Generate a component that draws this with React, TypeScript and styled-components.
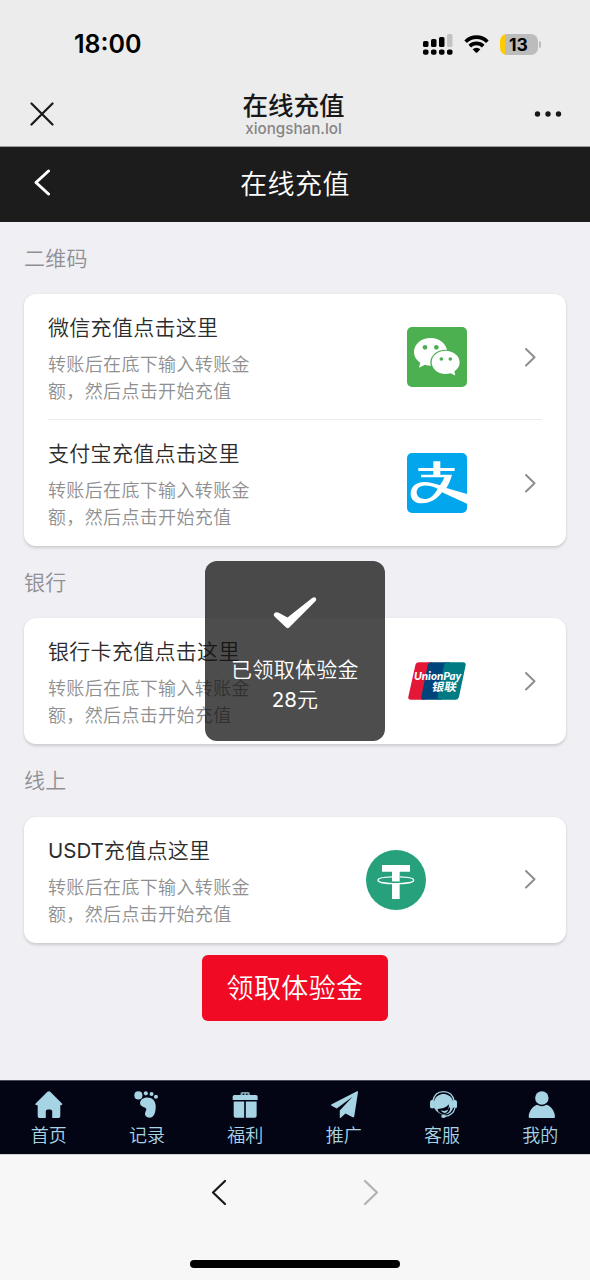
import React from 'react';
import styled, { createGlobalStyle } from 'styled-components';

const GlobalStyle = createGlobalStyle`
  * { box-sizing: border-box; }
  body {
    margin: 0;
    background: #efeff4;
    font-family: Inter, "Noto Sans CJK SC", sans-serif;
    font-weight: 400;
  }
`;

const Screen = styled.div`
  position: relative;
  display: flex;
  flex-direction: column;
  width: 590px;
  height: 1280px;
  overflow: hidden;
  background: #efeff4;
`;

const BrowserTop = styled.header`
  display: flex;
  flex-direction: column;
  height: 147px;
  background: #ececec;
  border-bottom: 1px solid #9c9c9c;
`;

const StatusBar = styled.div`
  display: flex;
  align-items: center;
  justify-content: space-between;
  height: 81px;
  padding: 7px 49px 0 74px;
`;

const Clock = styled.span`
  font-size: 25px;
  font-weight: 600;
  line-height: 30px;
  color: #000;
`;

const StatusIcons = styled.div`
  display: flex;
  align-items: center;
  gap: 11px;
`;

const Battery = styled.div`
  display: flex;
  align-items: center;
  gap: 1px;
`;

const BatteryBody = styled.div`
  width: 38px;
  height: 21px;
  border-radius: 7px;
  background: linear-gradient(90deg, #fdcb00 5px, #bcbcbc 5px);
  font-size: 17.5px;
  font-weight: 700;
  line-height: 21px;
  text-align: center;
  padding-right: 1px;
  color: #000;
`;

const BatteryTip = styled.div`
  width: 2px;
  height: 7px;
  border-radius: 0 2px 2px 0;
  background: #bcbcbc;
`;

const BrowserNav = styled.div`
  display: grid;
  grid-template-columns: 60px 1fr 60px;
  align-items: center;
  height: 65px;
  padding: 0 12px;
`;

const NavIcon = styled.svg`
  display: block;
  justify-self: center;
`;

const PageInfo = styled.div`
  display: flex;
  flex-direction: column;
  align-items: center;
  padding: 0 3px 0 0;
`;

const PageTitle = styled.div`
  font-size: 25.5px;
  font-weight: 500;
  line-height: 30px;
  color: #181818;
`;

const PageHost = styled.div`
  font-size: 15.2px;
  font-weight: 500;
  line-height: 16px;
  color: #858585;
`;

const AppBar = styled.div`
  display: grid;
  grid-template-columns: 60px 1fr 60px;
  align-items: center;
  height: 75px;
  padding: 0 12px;
  background: #1c1c1c;
`;

const BackButton = styled.div`
  padding: 0 0 5px 0;
`;

const AppTitle = styled.h1`
  margin: 0;
  font-size: 27px;
  font-weight: 350;
  line-height: 40px;
  letter-spacing: 0.4px;
  text-align: center;
  color: #fff;
`;

const Content = styled.main`
  display: flex;
  flex-direction: column;
  height: 858px;
  padding: 0 24px;
`;

const SectionLabel = styled.h2`
  display: flex;
  flex-shrink: 0;
  align-items: center;
  height: 72.2px;
  margin: 0;
  padding-bottom: 2px;
  font-size: 21px;
  font-weight: 350;
  letter-spacing: 0.3px;
  color: #8f8f94;
`;

const Card = styled.section`
  padding: 0 24px;
  border-radius: 12px;
  background: #fff;
  box-shadow: 0 1.5px 3px rgba(0, 0, 0, 0.15);
`;

const Row = styled.div<{ $divided?: boolean }>`
  display: flex;
  align-items: center;
  height: 126px;
  box-shadow: ${(p) => (p.$divided ? 'inset 0 -1px #ececec' : 'none')};
`;

const RowText = styled.div`
  width: 210px;
  height: 126px;
  padding-top: 18px;
`;

const RowTitle = styled.div`
  font-size: 21px;
  font-weight: 350;
  line-height: 31px;
  letter-spacing: 0.3px;
  color: #2c2c2c;
  white-space: nowrap;
`;

const Latin = styled.span`
  font-size: 20.5px;
  font-weight: 400;
  letter-spacing: 0;
`;

const RowDesc = styled.div`
  margin-top: 8px;
  font-size: 18px;
  font-weight: 350;
  line-height: 27px;
  letter-spacing: 0.35px;
  color: #8f8f8f;
`;

const RowIcon = styled.div<{ $inset: number }>`
  display: flex;
  align-items: center;
  justify-content: center;
  width: 60px;
  height: 60px;
  margin: 0 ${(p) => p.$inset}px 0 auto;
`;

const ChevronSlot = styled.div`
  padding-right: 5.5px;
`;

const ClaimButton = styled.button`
  align-self: center;
  width: 186px;
  height: 66px;
  margin-top: 12.4px;
  padding: 0;
  border: 0;
  border-radius: 6px;
  background: #f00a24;
  font-family: inherit;
  font-size: 27px;
  font-weight: 350;
  line-height: 67px;
  letter-spacing: 0.4px;
  color: #fff;
`;

const TabBar = styled.nav`
  display: grid;
  grid-template-columns: repeat(6, 1fr);
  height: 74px;
  background: #040514;
  border-top: 1px solid #4b4b55;
`;

const Tab = styled.div`
  display: flex;
  flex-direction: column;
  align-items: center;
  padding-top: 10px;
  color: #a7d4e4;
`;

const TabIcon = styled.svg`
  display: block;
  width: 27px;
  height: 27px;
  margin-bottom: 5px;
  overflow: visible;
`;

const TabLabel = styled.span`
  padding-right: 1px;
  font-size: 18px;
  font-weight: 350;
  line-height: 26px;
`;

const BrowserBottom = styled.footer`
  display: flex;
  flex-direction: column;
  align-items: center;
  justify-content: space-between;
  height: 126px;
  padding: 24px 0 12px;
  background: #f7f7f7;
  border-top: 1px solid #cfcfd2;
`;

const HistoryButtons = styled.div`
  display: flex;
  gap: 136px;
`;

const HomeIndicator = styled.div`
  width: 210px;
  height: 8px;
  border-radius: 4px;
  background: #000;
`;

const Toast = styled.div`
  position: absolute;
  top: 561px;
  left: 205px;
  display: flex;
  flex-direction: column;
  align-items: center;
  width: 180px;
  height: 180px;
  padding-top: 36px;
  border-radius: 12px;
  background: rgba(17, 17, 17, 0.75);
  color: #fff;
`;

const ToastText = styled.div`
  width: 140px;
  margin-top: 26px;
  font-size: 21px;
  font-weight: 350;
  line-height: 30px;
  letter-spacing: 0.3px;
  text-align: center;
`;

const SignalIcon = () => (
  <svg width="30" height="21" viewBox="0 0 30 21">
    <g fill="#000">
      <rect x="0" y="7" width="5.5" height="6" rx="1.6" />
      <rect x="8" y="5" width="5.5" height="8" rx="1.6" />
      <rect x="16" y="3" width="5.5" height="10" rx="1.6" />
      <rect x="0" y="15.5" width="5.5" height="5.2" rx="1.8" />
      <rect x="8" y="15.5" width="5.5" height="5.2" rx="1.8" />
      <rect x="16" y="15.5" width="5.5" height="5.2" rx="1.8" />
      <rect x="24" y="15.5" width="5.5" height="5.2" rx="1.8" />
    </g>
    <rect x="24" y="0" width="5.5" height="13" rx="1.6" fill="#c3c3c3" />
  </svg>
);

const WifiIcon = () => (
  <svg width="25" height="20" viewBox="0 0 26 20">
    <g fill="none" stroke="#000" strokeWidth="3.8">
      <path d="M1.700 7.600a16 16 0 0 1 22.600 0" />
      <path d="M6 12.200a9.900 9.900 0 0 1 14 0" />
    </g>
    <path d="M9 15.400a5.800 5.800 0 0 1 8 0l-3.200 3.400a1.100 1.100 0 0 1-1.600 0z" fill="#000" />
  </svg>
);

const Chevron = ({ left, w, h, color, stroke }: { left?: boolean; w: number; h: number; color: string; stroke: number }) => (
  <NavIcon width={w + 4} height={h + 4} viewBox={`-2 -2 ${w + 4} ${h + 4}`}>
    <path
      d={left ? `M${w} 0L0 ${h / 2}L${w} ${h}` : `M0 0L${w} ${h / 2}L0 ${h}`}
      fill="none"
      stroke={color}
      strokeWidth={stroke}
      strokeLinecap="round"
      strokeLinejoin="round"
    />
  </NavIcon>
);

const WechatLogo = () => (
  <svg width="60" height="60" viewBox="0 0 180 180">
    <rect width="180" height="180" rx="15" fill="#4caf50" />
    <path d="M71 33C43 33 21 51.500 21 75c0 13 7 24.500 19 32.500l-4 15 18-9c6 2 11 2.800 17 2.800 28 0 49.500-18 49.500-41S99 33 71 33z" fill="#fff" />
    <ellipse cx="115" cy="106" rx="45" ry="38" fill="#4caf50" />
    <path d="M115 71c-23 0-41 15.500-41 35s18 35 41 35c6 0 11-1 16-2.500l14 7-3-12c10-6.500 16-16 16-27.500 0-19.500-19-35-43-35z" fill="#fff" />
    <g fill="#4caf50">
      <circle cx="54" cy="61" r="7" />
      <circle cx="88" cy="61" r="7" />
      <circle cx="103" cy="96" r="5.500" />
      <circle cx="130" cy="96" r="5.500" />
    </g>
  </svg>
);

const AlipayLogo = () => (
  <svg width="60" height="60" viewBox="0 0 180 180">
    <rect width="180" height="180" rx="15" fill="#02a6ec" />
    <path
      d="M79 25h21v20h43v9h-43v11h35c-4 16-10 29-17 40l62 18v29l-75-34c-15 20-34 33-61 33-22 0-33-13-33-29 0-20 15-35 41-35 16 0 29 4 47 10 6-9 10-16 13-24H42v-8h37V54H34v-9h45z"
      fill="#fff"
    />
    <path d="M92 107C77 100 62 97 50 98c-13 1-21 9-21 20 0 13 10 20 25 20 16 0 28-13 38-31z" fill="#02a6ec" />
  </svg>
);

const UnionPayLogo = () => (
  <svg width="58" height="38" viewBox="0 0 174 114">
    <path d="M33 1h40L50 113H8q-9 0-7-9L22 10q2-9 11-9z" fill="#e21836" />
    <path d="M70 1h56L100 113H46q-8 0-6-9L59 10q2-9 11-9z" fill="#00447c" />
    <path d="M119 1h46q9 0 8 9l-20 94q-2 9-11 9H95q-8 0-6-9l19-94q2-9 11-9z" fill="#007b84" />
    <text x="18" y="53" fill="#fff" fontFamily="Lato, sans-serif" fontSize="36" fontWeight="900" fontStyle="italic" textLength="142" lengthAdjust="spacingAndGlyphs">UnionPay</text>
    <text transform="translate(70 87) skewX(-10)" fill="#fff" fontFamily="'Noto Sans CJK SC', sans-serif" fontSize="34" fontWeight="700" textLength="74" lengthAdjust="spacingAndGlyphs">银联</text>
  </svg>
);

const TetherLogo = () => (
  <svg width="60" height="60" viewBox="0 0 180 180">
    <circle cx="90" cy="90" r="90" fill="#27a17b" />
    <path d="M48 45h84v20h-31v82H78V65H48z" fill="#fff" />
    <path d="M78 97h23v5H78z" fill="#27a17b" />
    <path d="M78 80.500C54 81 36 85 36 90.500c0 6 24 10.500 53.500 10.500S143 96.500 143 90.500c0-5.500-18-9.500-42-10" fill="none" stroke="#fff" strokeWidth="4" />
    <path d="M78 94q11 1.500 23 0v4q-12 1.500-23 0z" fill="#27a17b" />
  </svg>
);

const tabs = [
  {
    label: '首页',
    icon: <path transform="translate(-2 0)" d="M35 3q5-5 10 0l34 34q3 5-4 5h-1v33q0 5-5 5H50V61q0-6-6-6h-7q-6 0-6 6v19H12q-5 0-5-5V42H5q-7 0-4-5z" />,
  },
  {
    label: '记录',
    icon: (
      <>
        <circle cx="13" cy="13" r="12" />
        <circle cx="35" cy="7" r="6" />
        <circle cx="52" cy="9" r="6" />
        <circle cx="65" cy="17" r="6" />
        <path d="M18 34C21 20 38 17 49 21c13 5 17 19 15 33-2 17-8 25-18 25-9 0-15-7-13-14 1-6 5-9 3-13-3-5-20-6-18-18z" />
      </>
    ),
  },
  {
    label: '福利',
    icon: (
      <>
        <path d="M25 12V8q0-5 5-5h18q5 0 5 5v4h-7V8h-4v4h-6V8h-4v4z" opacity=".75" />
        <path d="M7 12h64q5 0 5 5v10H2V17q0-5 5-5z" />
        <path d="M5 31h31v48H11q-6 0-6-6zM41 31h32v42q0 6-6 6H41z" />
      </>
    ),
  },
  {
    label: '推广',
    icon: <path d="M77 1q4-2 3 3L69 74q-1 6-6 3L43 67 29 79q-3 2-3-2V58l38-41-47 35L2 44q-4-3 0-5z" />,
  },
  {
    label: '客服',
    icon: (
      <g transform="translate(3 0)">
        <path d="M8 31C12 10 25 2 40 2s28 8 32 29" fill="none" stroke="currentColor" strokeWidth="4" />
        <path d="M12 50V30C17 15 28 9 40 9s23 6 28 21v20q-4 15-20 20-22 2-36-20z" />
        <path d="M22 53q23-1 34-14 1 7-3 14 5-2 6-7 3 14-8 20-9 5-19 1-8-4-10-14z" fill="#040514" />
        <path d="M32 57q12 5 22-2-3 10-11 10-7 0-11-8z" />
        <rect x="0" y="27" width="13" height="25" rx="6" />
        <rect x="67" y="27" width="13" height="25" rx="6" />
        <path d="M74 50C71 64 59 74 43 75" fill="none" stroke="#040514" strokeWidth="9" />
        <path d="M74 50C71 64 59 74 43 75" fill="none" stroke="currentColor" strokeWidth="3.500" />
        <ellipse cx="40" cy="75" rx="7" ry="5" />
      </g>
    ),
  },
  {
    label: '我的',
    icon: (
      <g transform="translate(3 0)">
        <circle cx="41" cy="21" r="20" />
        <path d="M27 41q14 8 28 0c14 5 24 19 25 35q0 4-4 4H6q-4 0-4-4c1-16 11-30 25-35z" />
      </g>
    ),
  },
];

const DESC = '转账后在底下输入转账金额，然后点击开始充值';

const Method = ({ title, logo, inset = 57, divided }: { title: React.ReactNode; logo: React.ReactNode; inset?: number; divided?: boolean }) => (
  <Row $divided={divided}>
    <RowText>
      <RowTitle>{title}</RowTitle>
      <RowDesc>{DESC}</RowDesc>
    </RowText>
    <RowIcon $inset={inset}>{logo}</RowIcon>
    <ChevronSlot>
      <Chevron w={8.5} h={16.5} color="#8e8e8e" stroke={2} />
    </ChevronSlot>
  </Row>
);

export default function App() {
  return (
    <Screen>
      <GlobalStyle />
      <BrowserTop>
        <StatusBar>
          <Clock>18:00</Clock>
          <StatusIcons>
            <SignalIcon />
            <WifiIcon />
            <Battery>
              <BatteryBody>13</BatteryBody>
              <BatteryTip />
            </Battery>
          </StatusIcons>
        </StatusBar>
        <BrowserNav>
          <NavIcon width="24" height="24" viewBox="0 0 24 24">
            <path d="M1.500 1.500l21 21M22.500 1.500l-21 21" stroke="#181818" strokeWidth="2.200" strokeLinecap="round" />
          </NavIcon>
          <PageInfo>
            <PageTitle>在线充值</PageTitle>
            <PageHost>xiongshan.lol</PageHost>
          </PageInfo>
          <NavIcon width="28" height="8" viewBox="0 0 28 8" fill="#181818">
            <circle cx="3.500" cy="4" r="2.700" />
            <circle cx="14" cy="4" r="2.700" />
            <circle cx="24.500" cy="4" r="2.700" />
          </NavIcon>
        </BrowserNav>
      </BrowserTop>
      <AppBar>
        <BackButton>
          <Chevron left w={12.5} h={23} color="#fff" stroke={3} />
        </BackButton>
        <AppTitle>在线充值</AppTitle>
      </AppBar>
      <Content>
        <SectionLabel>二维码</SectionLabel>
        <Card>
          <Method title="微信充值点击这里" logo={<WechatLogo />} divided />
          <Method title="支付宝充值点击这里" logo={<AlipayLogo />} />
        </Card>
        <SectionLabel>银行</SectionLabel>
        <Card>
          <Method title="银行卡充值点击这里" logo={<UnionPayLogo />} />
        </Card>
        <SectionLabel>线上</SectionLabel>
        <Card>
          <Method title={<><Latin>USDT</Latin>充值点这里</>} logo={<TetherLogo />} inset={98} />
        </Card>
        <ClaimButton>领取体验金</ClaimButton>
      </Content>
      <TabBar>
        {tabs.map((t) => (
          <Tab key={t.label}>
            <TabIcon viewBox="0 0 80 80" fill="currentColor">{t.icon}</TabIcon>
            <TabLabel>{t.label}</TabLabel>
          </Tab>
        ))}
      </TabBar>
      <BrowserBottom>
        <HistoryButtons>
          <Chevron left w={12} h={23} color="#181818" stroke={2.2} />
          <Chevron w={12} h={23} color="#b2b2b2" stroke={2.2} />
        </HistoryButtons>
        <HomeIndicator />
      </BrowserBottom>
      <Toast>
        <svg width="44" height="32" viewBox="0 0 44 32">
          <path d="M1.200 16.500q1.800-2.200 4.500-.8l8.800 4.800L39.500.8q2.500-1.200 3.500.8.600 1.400-.6 2.700L16.200 30.500q-1.500 1.500-3 0L1.500 19.500q-1.300-1.500-.3-3z" fill="#fff" />
        </svg>
        <ToastText>已领取体验金<Latin>28</Latin>元</ToastText>
      </Toast>
    </Screen>
  );
}
